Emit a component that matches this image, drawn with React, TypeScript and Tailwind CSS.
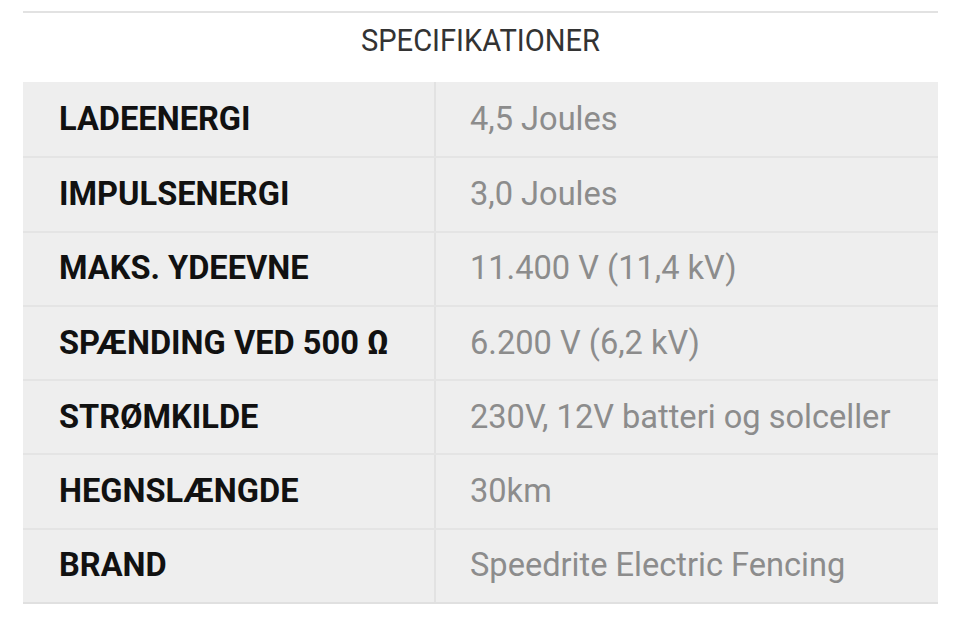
import React from 'react';

const specs: [string, string][] = [
  ['LADEENERGI', '4,5 Joules'],
  ['IMPULSENERGI', '3,0 Joules'],
  ['MAKS. YDEEVNE', '11.400 V (11,4 kV)'],
  ['SPÆNDING VED 500 Ω', '6.200 V (6,2 kV)'],
  ['STRØMKILDE', '230V, 12V batteri og solceller'],
  ['HEGNSLÆNGDE', '30km'],
  ['BRAND', 'Speedrite Electric Fencing'],
];

export default function App() {
  return (
    <div className="w-[960px] h-[618px] bg-white pt-[11px] font-['Roboto','Liberation_Sans',sans-serif]">
      <div className="ml-[23px] mr-[22px] border-t-2 border-[#e2e2e2]">
        <h2 className="h-[69px] pb-[16px] flex items-center justify-center text-[32px] font-normal text-[#333] scale-x-[0.91]">
          SPECIFIKATIONER
        </h2>
        <div className="bg-[#eeeeee] border-b-2 border-[#e0e0e0]">
          {specs.map(([label, value], i) => (
            <div
              key={label}
              className={`grid grid-cols-[413px_1fr] h-[74.3px] ${i > 0 ? 'border-t-2 border-[#e4e4e4]' : ''}`}
            >
              <div className="flex items-center pl-[36px] border-r-2 border-[#e2e2e2] text-[32.6px] font-bold text-[#111]">
                {label}
              </div>
              <div className="flex items-center pl-[34px] text-[32.6px] text-[#8c8c8c]">
                {value}
              </div>
            </div>
          ))}
        </div>
      </div>
    </div>
  );
}
